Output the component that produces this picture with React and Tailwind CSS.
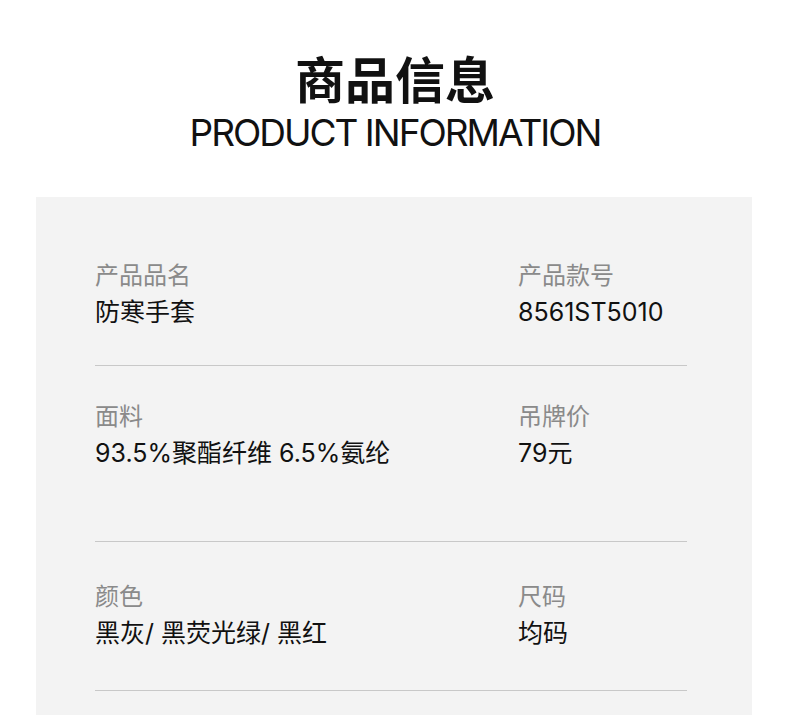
export default function App() {
  const font = { fontFamily: "Inter, 'Noto Sans CJK SC', sans-serif" };
  const Cell = ({ label, value }) => (
    <div className="flex flex-col">
      <div className="text-[24px] leading-[36px] text-[#8a8a8a]">{label}</div>
      <div className="text-[25px] leading-[36px] text-[#111]">{value}</div>
    </div>
  );
  return (
    <div className="w-[790px] h-[715px] bg-white overflow-hidden" style={font}>
      <div className="flex flex-col items-center pt-[56px]">
        <div className="text-[50px] leading-[50px] font-bold text-[#111]">商品信息</div>
        <div className="text-[37px] leading-[40px] mt-[7px] tracking-[-2px] text-[#111]">PRODUCT INFORMATION</div>
      </div>
      <div className="mt-[44px] ml-[36px] w-[716px] h-[600px] bg-[#f3f3f3] px-[59px]">
        <div className="w-[592px]">
          <div className="grid grid-cols-[423px_1fr] pt-[61px] pb-[35px] border-b border-[#c8c8c8]">
            <Cell label="产品品名" value="防寒手套" />
            <Cell label="产品款号" value="8561ST5010" />
          </div>
          <div className="grid grid-cols-[423px_1fr] pt-[33px] pb-[70px] border-b border-[#c8c8c8]">
            <Cell label="面料" value="93.5%聚酯纤维 6.5%氨纶" />
            <Cell label="吊牌价" value="79元" />
          </div>
          <div className="grid grid-cols-[423px_1fr] pt-[37px] pb-[39px] border-b border-[#c8c8c8]">
            <Cell label="颜色" value="黑灰/ 黑荧光绿/ 黑红" />
            <Cell label="尺码" value="均码" />
          </div>
        </div>
      </div>
    </div>
  );
}
